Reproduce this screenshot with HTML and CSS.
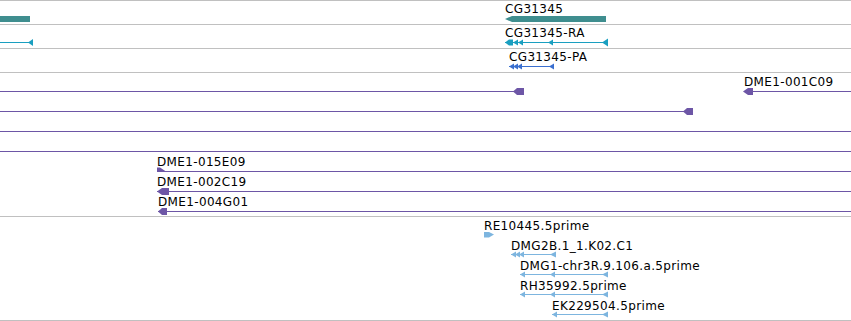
FILE: index.html
```html
<!DOCTYPE html>
<html lang="en">
<head>
  <meta charset="UTF-8">
  <title>Track View</title>
  <link rel="stylesheet" href="styles.css">
</head>

<body>

<div class="tracks">

  <!-- gene span -->
  <div class="track first">
    <svg viewBox="0 1 851 23" width="851" height="23">
      <rect class="teal" x="0" y="16" width="30" height="6"/>
      <text class="label" x="505" y="13">CG31345</text>
      <polygon class="teal" points="505,19 512,16 606,16 606,22 512,22"/>
    </svg>
  </div>

  <!-- transcripts -->
  <div class="track">
    <svg viewBox="0 25 851 23" width="851" height="23">
      <rect class="cyan" x="0" y="42" width="30" height="1"/>
      <polygon class="cyan" points="28,42.5 33,39 33,46"/>
      <text class="label" x="505" y="37">CG31345-RA</text>
      <rect class="cyan" x="505" y="42" width="103" height="1"/>
      <polygon class="cyan" points="505,42.5 509,39.5 513,39.5 513,45.5 509,45.5"/>
      <polygon class="cyan" points="513,42.5 518,39.5 518,45.5"/>
      <polygon class="cyan" points="518,42.5 523,39.5 523,45.5"/>
      <polygon class="cyan" points="548,42.5 553,39.5 553,45.5"/>
      <polygon class="cyan" points="602,42.5 608,38.5 608,46.5"/>
    </svg>
  </div>

  <!-- proteins -->
  <div class="track">
    <svg viewBox="0 49 851 23" width="851" height="23">
      <text class="label" x="509" y="61">CG31345-PA</text>
      <rect class="blue" x="509" y="66" width="45" height="1"/>
      <polygon class="blue" points="509,66.5 514,63.5 514,69.5"/>
      <polygon class="blue" points="513,66.5 518,63.5 518,69.5"/>
      <polygon class="blue" points="517,66.5 522,63.5 522,69.5"/>
      <polygon class="blue" points="549,66.5 554,63.5 554,69.5"/>
    </svg>
  </div>

  <!-- cDNA clones -->
  <div class="track">
    <svg viewBox="0 73 851 143" width="851" height="143">
      <rect class="purple" x="0" y="91" width="517" height="1"/>
      <polygon class="purple" points="513,91.5 517,88 524,88 524,95 517,95"/>
      <text class="label" x="744" y="86">DME1-001C09</text>
      <rect class="purple" x="744" y="91" width="107" height="1"/>
      <polygon class="purple" points="743,91.5 748,88 753,88 753,95 748,95"/>

      <rect class="purple" x="0" y="111" width="690" height="1"/>
      <polygon class="purple" points="683,111.5 687,108 693,108 693,115 687,115"/>

      <rect class="purple" x="0" y="131" width="851" height="1"/>
      <rect class="purple" x="0" y="151" width="851" height="1"/>

      <text class="label" x="157" y="166">DME1-015E09</text>
      <rect class="purple" x="157" y="171" width="694" height="1"/>
      <polygon class="purple" points="157,167.5 160,167.5 166,171.5 157,172"/>

      <text class="label" x="157" y="186">DME1-002C19</text>
      <rect class="purple" x="157" y="191" width="694" height="1"/>
      <polygon class="purple" points="157,191.5 162,188 169,188 169,195 162,195"/>

      <text class="label" x="158" y="206">DME1-004G01</text>
      <rect class="purple" x="158" y="211" width="693" height="1"/>
      <polygon class="purple" points="158,211.5 162,208 167,208 167,215 162,215"/>
    </svg>
  </div>

  <!-- ESTs -->
  <div class="track">
    <svg viewBox="0 217 851 103" width="851" height="103">
      <text class="label" x="484" y="230">RE10445.5prime</text>
      <polygon class="sky" points="484,232 489,232 494,234.5 489,237.5 484,237.5"/>

      <text class="label" x="511" y="250">DMG2B.1_1.K02.C1</text>
      <rect class="sky" x="511" y="254" width="45" height="1"/>
      <polygon class="sky" points="511,254.5 516,251.5 516,257.5"/>
      <polygon class="sky" points="515,254.5 520,251.5 520,257.5"/>
      <polygon class="sky" points="519,254.5 524,251.5 524,257.5"/>
      <polygon class="sky" points="550,254.5 556,251.5 556,257.5"/>

      <text class="label" x="520" y="270">DMG1-chr3R.9.106.a.5prime</text>
      <rect class="sky" x="520" y="274" width="88" height="1"/>
      <polygon class="sky" points="520,274.5 525,271.5 525,277.5"/>
      <polygon class="sky" points="550,274.5 555,271.5 555,277.5"/>
      <polygon class="sky" points="602,274.5 608,271.5 608,277.5"/>

      <text class="label" x="520" y="290">RH35992.5prime</text>
      <rect class="sky" x="520" y="294" width="88" height="1"/>
      <polygon class="sky" points="520,294.5 525,291.5 525,297.5"/>
      <polygon class="sky" points="550,294.5 555,291.5 555,297.5"/>
      <polygon class="sky" points="602,294.5 608,291.5 608,297.5"/>

      <text class="label" x="552" y="310">EK229504.5prime</text>
      <rect class="sky" x="552" y="314" width="56" height="1"/>
      <polygon class="sky" points="552,314.5 557,311.5 557,317.5"/>
      <polygon class="sky" points="602,314.5 608,311.5 608,317.5"/>
    </svg>
  </div>

</div>

</body>
</html>
```

FILE: styles.css
```css
body {
  margin: 0;
  background-color: #fff;
  font-family: "DejaVu Sans", sans-serif;
  overflow: hidden;
}

.tracks {
  width: 851px;
}

.track {
  border-bottom: 1px solid #c0c0c0;
}

.track.first {
  border-top: 1px solid #c0c0c0;
}

.track svg {
  display: block;
}

.label {
  font-family: "DejaVu Sans", sans-serif;
  font-size: 12px;
  letter-spacing: 0.35px;
  fill: #000;
}

.teal {
  fill: #3f8e8f;
}

.cyan {
  fill: #1a9fc0;
}

.blue {
  fill: #3a6fcf;
}

.purple {
  fill: #6d56a6;
}

.sky {
  fill: #7db5df;
}
```
